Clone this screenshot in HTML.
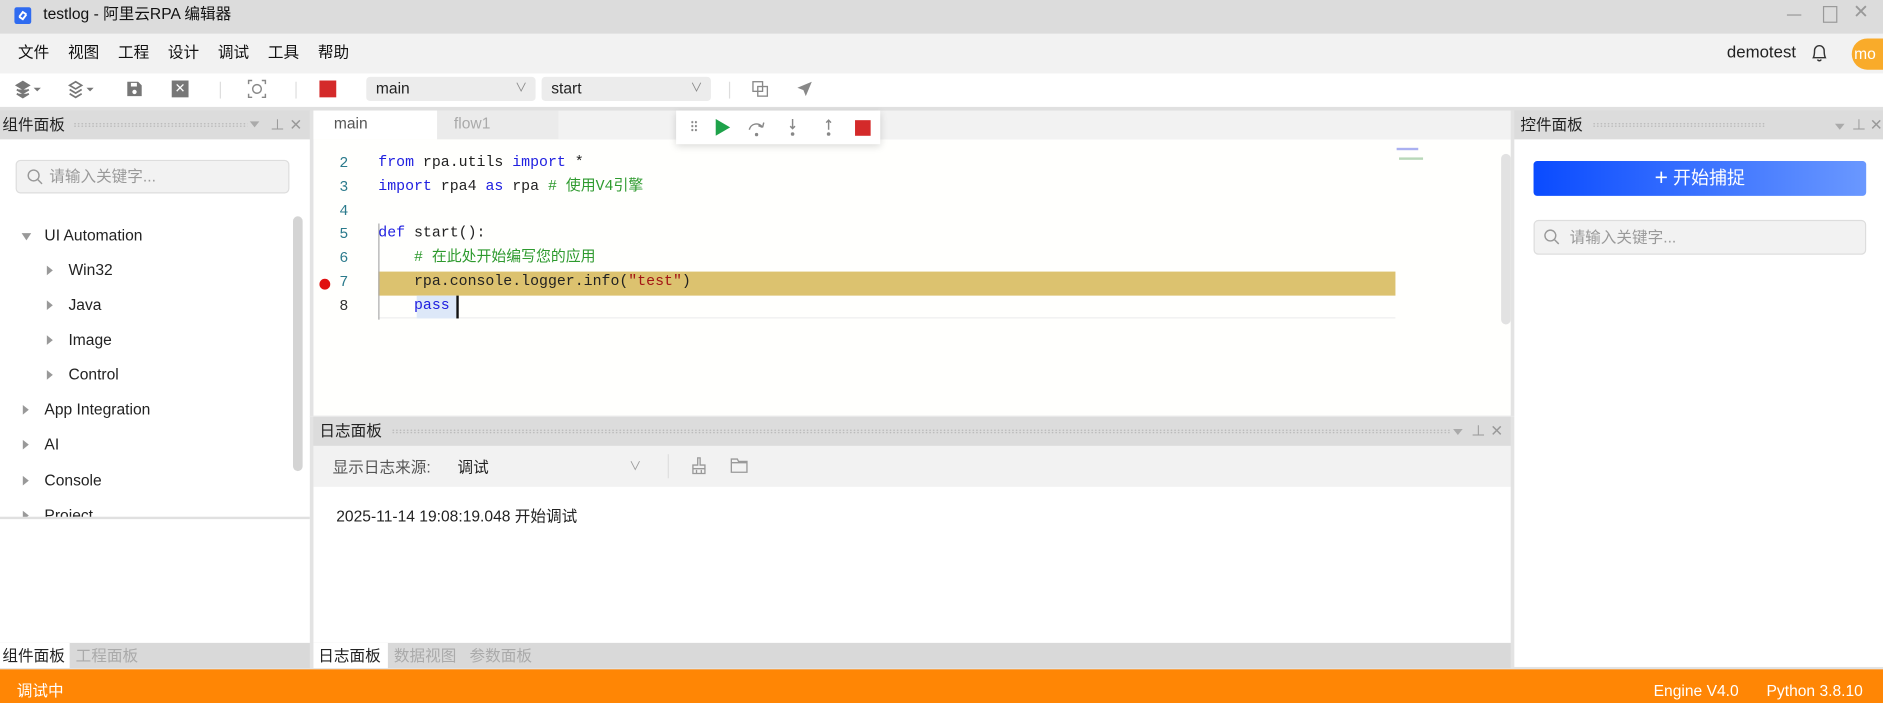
<!DOCTYPE html>
<html><head><meta charset="utf-8">
<style>
*{box-sizing:border-box;margin:0;padding:0}
html,body{width:1883px;height:703px;overflow:hidden;background:#e3e3e3}
#s{position:absolute;left:0;top:0;width:1568px;height:585px;transform:scale(1.20089,1.20171);transform-origin:0 0;font-family:"Liberation Sans","Noto Sans CJK SC",sans-serif;font-size:13px;line-height:16px;color:#222;background:#e3e3e3}
.a{position:absolute}
.hdr{background:#dcdcdc;height:24px;font-size:13px;color:#222}
.dots{position:absolute;top:10px;height:4px;background-image:radial-gradient(#b8b8b8 0.6px,transparent 0.9px);background-size:3px 2px}
.pinx{position:absolute;top:4px;font-size:12px;color:#999}
.tree{position:absolute;font-size:13px;color:#222}
.tri{position:absolute;width:0;height:0;border-top:4px solid transparent;border-bottom:4px solid transparent;border-left:5px solid #999}
.code{position:absolute;left:315px;font-family:"Liberation Mono","Noto Sans CJK SC",monospace;font-size:12.4px;line-height:19.6px;white-space:pre;color:#222}
.ln{position:absolute;left:272px;width:18px;text-align:right;font-family:"Liberation Mono",monospace;font-size:12.4px;color:#2b7a8c}
.kw{color:#2020e0}.cm{color:#2e9a2e}.st{color:#a31515}
.sel{position:absolute;height:20px;background:#ececec;border-radius:3px;font-size:13px;line-height:14px;padding:3px 8px}
</style></head><body><div id="s">
<div class="a" style="left:0;top:0;width:1568px;height:28px;background:#dcdcdc"></div>
<div class="a" style="left:12px;top:6px;width:14px;height:14px;background:#2f6bf0;border-radius:2px"></div>
<svg class="a" style="left:12px;top:6px" width="14" height="14"><path d="M4 8 L7 4 L10 6 M10 6 L7 10 L4 8" stroke="#fff" stroke-width="1.6" fill="none"/></svg>
<div class="a" style="left:36px;top:4px;font-size:13px;color:#111">testlog - 阿里云RPA 编辑器</div>
<div class="a" style="left:1488px;top:12px;width:12px;height:1px;background:#999"></div>
<div class="a" style="left:1518px;top:5px;width:12px;height:14px;border:1px solid #999"></div>
<div class="a" style="left:1543px;top:3px;font-size:16px;color:#999">✕</div>
<div class="a" style="left:0;top:28px;width:1568px;height:33px;background:#f2f2f2"></div>
<div class="a" style="left:15px;top:36px;font-size:13px;word-spacing:12px;color:#111">文件 视图 工程 设计 调试 工具 帮助</div>
<div class="a" style="left:1438px;top:35px;font-size:14px;color:#222">demotest</div>
<svg class="a" style="left:1507px;top:35px" width="16" height="18"><path d="M3 13 Q4 11 4 7 A4 4 0 0 1 12 7 Q12 11 13 13 Z M6.5 14.5 A1.6 1.6 0 0 0 9.5 14.5" stroke="#333" stroke-width="1.2" fill="none"/></svg>
<div class="a" style="left:1542px;top:32px;width:26px;height:26px;border-radius:13px 0 0 13px;background:#f9ab2a;color:#fff;font-size:13px;line-height:26px;padding-left:2px">mo</div>
<div class="a" style="left:0;top:61px;width:1568px;height:28px;background:#fff"></div>
<svg class="a" style="left:12px;top:66px" width="80" height="18">
<path d="M2 5 L7 2 L12 5 L7 8Z M2 8.5 L7 11.5 L12 8.5 M2 12 L7 15 L12 12" stroke="#777" stroke-width="1.6" fill="#777"/>
<path d="M16 7 L22 7 L19 10Z" fill="#777"/>
<path d="M46 5 L51 2 L56 5 L51 8Z M46 8.5 L51 11.5 L56 8.5 M46 12 L51 15 L56 12" stroke="#777" stroke-width="1.4" fill="none"/>
<path d="M60 7 L66 7 L63 10Z" fill="#777"/></svg>
<svg class="a" style="left:104px;top:66px" width="16" height="16"><path d="M2 2 H11 L14 5 V14 H2Z" fill="#777"/><rect x="5" y="3" width="5" height="3" fill="#fff"/><circle cx="8" cy="10.5" r="1.8" fill="#fff"/></svg>
<div class="a" style="left:143px;top:67px;width:14px;height:14px;background:#777;color:#fff;font-size:11px;line-height:14px;text-align:center">✕</div>
<div class="a" style="left:183px;top:68px;width:1px;height:14px;background:#ddd"></div>
<svg class="a" style="left:206px;top:66px" width="16" height="16" fill="none" stroke="#888" stroke-width="1.2"><circle cx="8" cy="8" r="3.6"/><path d="M1 4V1H4 M12 1H15V4 M15 12V15H12 M4 15H1V12"/></svg>
<div class="a" style="left:246px;top:68px;width:1px;height:14px;background:#ddd"></div>
<div class="a" style="left:266px;top:67px;width:14px;height:14px;background:#d42a2a"></div>
<div class="sel" style="left:305px;top:64px;width:141px">main<span style="position:absolute;right:7px;top:3px;color:#888;font-size:10px">∨</span></div>
<div class="sel" style="left:451px;top:64px;width:141px">start<span style="position:absolute;right:7px;top:3px;color:#888;font-size:10px">∨</span></div>
<div class="a" style="left:607px;top:68px;width:1px;height:14px;background:#ddd"></div>
<svg class="a" style="left:626px;top:67px" width="14" height="15" fill="none" stroke="#888" stroke-width="1.1"><rect x="1" y="1" width="8" height="8"/><rect x="5" y="5" width="8" height="8"/></svg>
<svg class="a" style="left:663px;top:67px" width="14" height="14"><path d="M13 1 L1 6 L6 8 L8 13Z" fill="#888"/></svg>
<div class="a" style="left:0;top:89px;width:1568px;height:3px;background:#e0e0e0"></div>
<div class="a hdr" style="left:0;top:92px;width:258px"><span style="position:absolute;left:2px;top:4px">组件面板</span></div>
<div class="dots" style="left:61px;width:145px;top:102px"></div>
<div class="a" style="left:208px;top:101px;border-left:4px solid transparent;border-right:4px solid transparent;border-top:5px solid #aaa"></div>
<div class="pinx" style="left:225px;top:96px">⊥</div><div class="pinx" style="left:241px;top:96px;font-size:13px">✕</div>
<div class="a" style="left:0;top:116px;width:258px;height:419px;background:#fff"></div>
<div class="a" style="left:13px;top:133px;width:228px;height:28px;background:#f2f2f2;border:1px solid #ddd;border-radius:4px"></div>
<svg class="a" style="left:22px;top:140px" width="14" height="14" fill="none" stroke="#999" stroke-width="1.2"><circle cx="6" cy="6" r="4.5"/><path d="M9.5 9.5 L13 13"/></svg>
<div class="a" style="left:41px;top:139px;color:#999;font-size:13px">请输入关键字...</div>
<div class="a" style="left:18px;top:194px;border-left:4px solid transparent;border-right:4px solid transparent;border-top:6px solid #999"></div>
<div class="tree" style="left:37px;top:188px">UI Automation</div>
<div class="tri" style="left:39px;top:221px"></div><div class="tree" style="left:57px;top:217px">Win32</div>
<div class="tri" style="left:39px;top:250px"></div><div class="tree" style="left:57px;top:246px">Java</div>
<div class="tri" style="left:39px;top:279px"></div><div class="tree" style="left:57px;top:275px">Image</div>
<div class="tri" style="left:39px;top:308px"></div><div class="tree" style="left:57px;top:304px">Control</div>
<div class="tri" style="left:19px;top:337px"></div><div class="tree" style="left:37px;top:333px">App Integration</div>
<div class="tri" style="left:19px;top:366px"></div><div class="tree" style="left:37px;top:362px">AI</div>
<div class="tri" style="left:19px;top:396px"></div><div class="tree" style="left:37px;top:392px">Console</div>
<div class="a" style="left:0;top:420px;width:244px;height:11px;overflow:hidden"><div class="tri" style="left:19px;top:5px"></div><div class="tree" style="left:37px;top:1px">Project</div></div>
<div class="a" style="left:244px;top:180px;width:8px;height:212px;background:#d4d4d4;border-radius:4px"></div>
<div class="a" style="left:0;top:430px;width:258px;height:2px;background:#e0e0e0"></div>
<div class="a" style="left:0;top:535px;width:258px;height:21px;background:#d9d9d9"></div>
<div class="a" style="left:0;top:535px;width:58px;height:21px;background:#fff"></div>
<div class="a" style="left:2px;top:538px;font-size:13px">组件面板</div>
<div class="a" style="left:63px;top:538px;font-size:13px;color:#aaa">工程面板</div>
<div class="a" style="left:261px;top:92px;width:997px;height:24px;background:#f2f2f2"></div>
<div class="a" style="left:261px;top:92px;width:103px;height:24px;background:#fff"></div>
<div class="a" style="left:278px;top:95px;font-size:13px;color:#555">main</div>
<div class="a" style="left:364px;top:92px;width:101px;height:24px;background:#ebebeb"></div>
<div class="a" style="left:378px;top:95px;font-size:13px;color:#aaa">flow1</div>
<div class="a" style="left:261px;top:116px;width:997px;height:230px;background:#fffffd"></div>
<div class="a" style="left:315px;top:226px;width:847px;height:20px;background:#dcc26f"></div>
<div class="a" style="left:315px;top:264px;width:847px;height:1px;background:#eee"></div>
<div class="a" style="left:347px;top:246px;width:33px;height:19px;background:#dde8f8"></div>
<div class="a" style="left:315px;top:186px;width:1px;height:80px;background:#aaa"></div>
<div class="a" style="left:261px;top:116px;width:997px;height:4px;overflow:hidden"><div class="code" style="left:54px;top:-15px"><span class="kw">from</span> rpa.core <span class="kw">import</span> *</div></div>
<div class="ln" style="top:128px">2</div><div class="code" style="top:126px"><span class="kw">from</span> rpa.utils <span class="kw">import</span> *</div>
<div class="ln" style="top:148px">3</div><div class="code" style="top:146px"><span class="kw">import</span> rpa4 <span class="kw">as</span> rpa <span class="cm"># 使用V4引擎</span></div>
<div class="ln" style="top:168px">4</div>
<div class="ln" style="top:187px">5</div><div class="code" style="top:185px"><span class="kw">def</span> start():</div>
<div class="ln" style="top:207px">6</div><div class="code" style="top:205px">    <span class="cm"># 在此处开始编写您的应用</span></div>
<div class="a" style="left:266px;top:232px;width:9px;height:9px;border-radius:50%;background:#e01010"></div>
<div class="ln" style="top:227px">7</div><div class="code" style="top:225px">    rpa.console.logger.info(<span class="st">"test"</span>)</div>
<div class="ln" style="top:247px;color:#333">8</div><div class="code" style="top:245px">    <span class="kw">pass</span></div>
<div class="a" style="left:380px;top:246px;width:1.5px;height:19px;background:#111"></div>
<div class="a" style="left:1163px;top:123px;width:18px;height:2px;background:#aab0f0"></div>
<div class="a" style="left:1165px;top:131px;width:20px;height:2px;background:#b8d8b8"></div>
<div class="a" style="left:1250px;top:128px;width:8px;height:142px;background:#e2e2e2;border-radius:4px"></div>
<div class="a" style="left:563px;top:92px;width:170px;height:28px;background:#fff;box-shadow:0 2px 6px rgba(0,0,0,.15)"></div>
<div class="a" style="left:575px;top:100px;width:6px;height:10px;background-image:radial-gradient(#888 0.8px,transparent 1px);background-size:3px 3.3px"></div>
<svg class="a" style="left:595px;top:99px" width="14" height="14"><path d="M1 0 L13 7 L1 14Z" fill="#1ea24a"/></svg>
<svg class="a" style="left:622px;top:98px" width="16" height="16" fill="none" stroke="#888" stroke-width="1.2"><path d="M2 10 A6 6 0 0 1 13 8 M13 8 L14 4 M13 8 L9.5 6.5"/><circle cx="8" cy="14" r="0.8" fill="#888"/></svg>
<svg class="a" style="left:655px;top:98px" width="10" height="16" stroke="#888" stroke-width="1.2" fill="none"><path d="M5 1 V9 M3 7 L5 9 L7 7"/><circle cx="5" cy="13.5" r="0.9" fill="#888"/></svg>
<svg class="a" style="left:685px;top:98px" width="10" height="16" stroke="#888" stroke-width="1.2" fill="none"><path d="M5 10 V2 M3 4 L5 2 L7 4"/><circle cx="5" cy="13.5" r="0.9" fill="#888"/></svg>
<div class="a" style="left:712px;top:100px;width:13px;height:13px;background:#d42a2a"></div>
<div class="a" style="left:258px;top:346px;width:1003px;height:1px;background:#e8e8e8"></div>
<div class="a hdr" style="left:261px;top:347px;width:997px"><span style="position:absolute;left:5px;top:4px">日志面板</span></div>
<div class="dots" style="left:326px;width:882px;top:357px"></div>
<div class="a" style="left:1210px;top:357px;border-left:4px solid transparent;border-right:4px solid transparent;border-top:5px solid #aaa"></div>
<div class="pinx" style="left:1225px;top:351px">⊥</div><div class="pinx" style="left:1241px;top:351px;font-size:13px">✕</div>
<div class="a" style="left:261px;top:371px;width:997px;height:34px;background:#f2f2f2"></div>
<div class="a" style="left:277px;top:381px;font-size:13px;color:#555">显示日志来源:</div>
<div class="a" style="left:381px;top:381px;font-size:13px;color:#222">调试</div>
<div class="a" style="left:524px;top:381px;font-size:10px;color:#999">∨</div>
<div class="a" style="left:556px;top:378px;width:1px;height:20px;background:#ddd"></div>
<svg class="a" style="left:575px;top:380px" width="14" height="16" fill="none" stroke="#999" stroke-width="1.1"><path d="M6 1 H8 V7 H12 V14 H2 V7 H6Z M2 10 H12 M5 11 V14 M9 11 V14"/></svg>
<svg class="a" style="left:608px;top:380px" width="16" height="14" fill="none" stroke="#999" stroke-width="1.1"><path d="M1 2 H6 L7 4 H14 V13 H1Z M1 5 H14"/></svg>
<div class="a" style="left:261px;top:405px;width:997px;height:130px;background:#fff"></div>
<div class="a" style="left:280px;top:422px;font-size:13px;color:#222">2025-11-14 19:08:19.048 开始调试</div>
<div class="a" style="left:261px;top:535px;width:997px;height:21px;background:#d9d9d9"></div>
<div class="a" style="left:261px;top:535px;width:62px;height:21px;background:#fff"></div>
<div class="a" style="left:265px;top:538px;font-size:13px">日志面板</div>
<div class="a" style="left:328px;top:538px;font-size:13px;color:#aaa">数据视图</div>
<div class="a" style="left:391px;top:538px;font-size:13px;color:#aaa">参数面板</div>
<div class="a hdr" style="left:1261px;top:92px;width:307px"><span style="position:absolute;left:5px;top:4px">控件面板</span></div>
<div class="dots" style="left:1326px;width:144px;top:102px"></div>
<div class="a" style="left:1528px;top:103px;border-left:4px solid transparent;border-right:4px solid transparent;border-top:5px solid #aaa"></div>
<div class="pinx" style="left:1542px;top:96px">⊥</div><div class="pinx" style="left:1557px;top:96px;font-size:13px">✕</div>
<div class="a" style="left:1261px;top:116px;width:307px;height:439px;background:#fff"></div>
<div class="a" style="left:1277px;top:134px;width:277px;height:29px;border-radius:3px;background:linear-gradient(90deg,#0a4bff,#6a98ff);color:#fff;font-size:15px;text-align:center;line-height:29px"><span style="font-size:19px;vertical-align:-1px">+</span> 开始捕捉</div>
<div class="a" style="left:1277px;top:183px;width:277px;height:29px;background:#f2f2f2;border:1px solid #ddd;border-radius:4px"></div>
<svg class="a" style="left:1285px;top:190px" width="14" height="14" fill="none" stroke="#999" stroke-width="1.2"><circle cx="6" cy="6" r="4.5"/><path d="M9.5 9.5 L13 13"/></svg>
<div class="a" style="left:1307px;top:190px;color:#999;font-size:13px">请输入关键字...</div>
<div class="a" style="left:0;top:557px;width:1568px;height:28px;background:#ff8605"></div>
<div class="a" style="left:14px;top:567px;color:#fff;font-size:13px">调试中</div>
<div class="a" style="left:1377px;top:567px;color:#fff;font-size:13px">Engine V4.0</div>
<div class="a" style="left:1471px;top:567px;color:#fff;font-size:13px">Python 3.8.10</div>
</div></body></html>
